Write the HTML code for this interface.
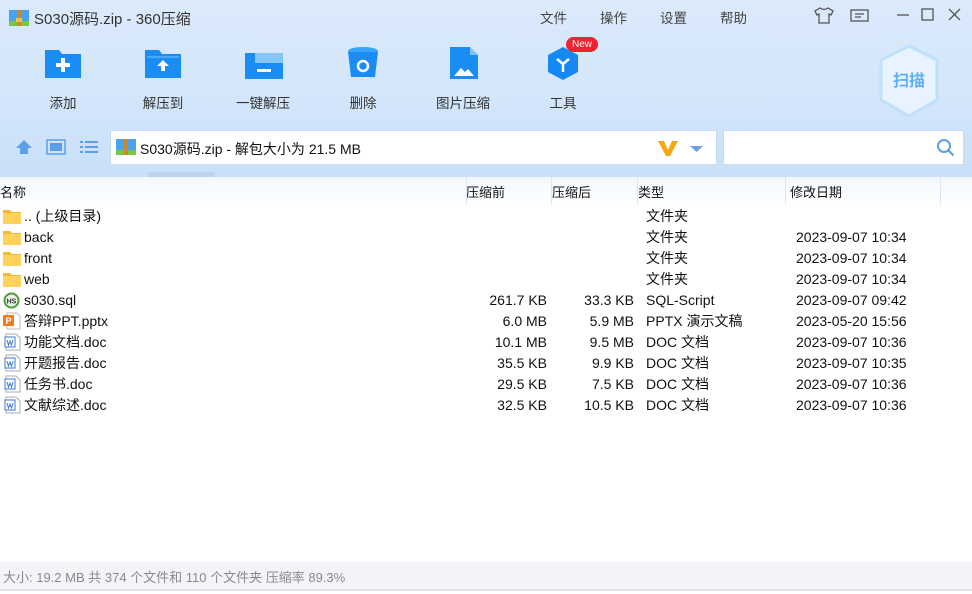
<!DOCTYPE html>
<html><head><meta charset="utf-8"><style>
*{margin:0;padding:0;box-sizing:border-box}
body{width:972px;height:594px;overflow:hidden;font-family:"Liberation Sans","Noto Sans CJK SC",sans-serif;background:#fff;position:relative;color:#111}
.top{position:absolute;left:0;top:0;width:972px;height:177px;background:linear-gradient(180deg,#dbeafb 0%,#d2e5fa 60%,#c9e0f8 100%)}
.abs{position:absolute}
.title{left:34px;top:8px;font-size:15px;color:#333}
.menu{top:7px;font-size:13.5px;color:#444}
.tb{top:46px;width:80px;text-align:center;font-size:13.5px;color:#333}
.tb svg{display:block;margin:0 auto 12px}
.box{background:#fff;border:1px solid #c6dcf2}
.hdr{position:absolute;top:177px;left:0;width:972px;height:27px;background:linear-gradient(180deg,#f3f8fe,#fdfeff);font-size:13px}
.hdr span{position:absolute;top:5px}
.sep{position:absolute;top:0;width:1px;height:27px;background:#dbe7f5}
.row{position:absolute;left:0;width:972px;height:21px;font-size:14px;line-height:21px}
.row .n{position:absolute;left:24px}
.row .a{position:absolute;right:425px;text-align:right}
.row .b{position:absolute;right:338px;text-align:right}
.row .t{position:absolute;left:646px}
.row .d{position:absolute;left:796px}
.row .ic{position:absolute;left:3px;top:3px}
.status{position:absolute;left:0;top:562px;width:972px;height:29px;background:#f3f4f8;font-size:13px;color:#8a8a8a;line-height:31px;padding-left:3px;border-bottom:2px solid #e3e3e6}
</style></head><body>
<div class="top"></div>
<svg class="abs" style="left:9px;top:9px" width="20" height="18"><rect x="0" y="1" width="20" height="14" fill="#4ba3ee"/><rect x="0" y="12" width="20" height="5" fill="#7cc443"/><rect x="8" y="1" width="4" height="16" fill="#c98a2b"/><rect x="7" y="9" width="6" height="4" fill="#f2c14c"/></svg>
<div class="abs title">S030源码.zip - 360压缩</div>
<div class="abs menu" style="left:540px">文件</div>
<div class="abs menu" style="left:600px">操作</div>
<div class="abs menu" style="left:660px">设置</div>
<div class="abs menu" style="left:720px">帮助</div>
<svg class="abs" style="left:814px;top:7px" width="20" height="17" fill="none" stroke="#555" stroke-width="1.3"><path d="M6 1 L1 4 L3 8 L5 7 L5 16 L15 16 L15 7 L17 8 L19 4 L14 1 Q10 4 6 1Z"/></svg>
<svg class="abs" style="left:850px;top:9px" width="19" height="14" fill="none" stroke="#555" stroke-width="1.3"><rect x="1" y="1" width="17" height="11"/><path d="M5 5h9M5 8h6"/></svg>
<svg class="abs" style="left:896px;top:8px" width="70" height="14" stroke="#555" stroke-width="1.3" fill="none"><path d="M1 7h12"/><rect x="26" y="1" width="11" height="11"/><path d="M53 1l11 11M64 1l-11 11"/></svg>

<div class="abs tb" style="left:23px"><svg width="40" height="34"><path d="M2 4h14l3 4h19v24H2z" fill="#1a8cf5"/><path d="M18 12h4v5h5v4h-5v5h-4v-5h-5v-4h5z" fill="#fff"/></svg>添加</div>
<div class="abs tb" style="left:123px"><svg width="40" height="34"><path d="M2 4h14l3 4h19v24H2z" fill="#1a8cf5"/><path d="M4 11h32" stroke="#7fc3ff"/><path d="M20 14l6 6h-4v5h-4v-5h-4z" fill="#fff"/></svg>解压到</div>
<div class="abs tb" style="left:223px"><svg width="40" height="34"><rect x="2" y="7" width="38" height="26" fill="#1a8cf5"/><path d="M12 7h28v10H12z" fill="#86c7fb"/><rect x="14" y="23" width="14" height="3" fill="#fff"/></svg>一键解压</div>
<div class="abs tb" style="left:323px"><svg width="40" height="34"><ellipse cx="20" cy="5" rx="15" ry="4" fill="#38a4f8"/><path d="M5 6l3 25h24l3-25z" fill="#1a8cf5"/><circle cx="20" cy="20" r="5" fill="none" stroke="#fff" stroke-width="2.5"/></svg>删除</div>
<div class="abs tb" style="left:423px"><svg width="40" height="34"><path d="M7 1h20l8 8v24H7z" fill="#1a8cf5"/><path d="M27 1v8h8z" fill="#7fc3ff"/><path d="M11 30l7-8 4 4 3-3 6 7z" fill="#fff"/></svg>图片压缩</div>
<div class="abs tb" style="left:523px"><svg width="40" height="34"><path d="M20 1l15 8v17l-15 8-15-8V9z" fill="#1589f3"/><path d="M14 13l6 5 6-5M20 18v8" stroke="#fff" stroke-width="2.5" fill="none"/></svg>工具</div>
<div class="abs" style="left:566px;top:37px;width:32px;height:15px;border-radius:8px;background:#f2212f;color:#fff;font-size:10px;text-align:center;line-height:15px">New</div>
<svg class="abs" style="left:878px;top:44px" width="62" height="74"><path d="M31 2l28 14v40L31 72 3 56V16z" fill="#e7f3fe" stroke="#bfe0fb" stroke-width="3"/><text x="31" y="42" font-size="16" font-weight="bold" fill="#5eaef0" text-anchor="middle" font-family="Noto Sans CJK SC,sans-serif">扫描</text></svg>

<svg class="abs" style="left:15px;top:139px" width="18" height="16"><path d="M9 1l8 8h-4v6H5V9H1z" fill="#5a9fe8"/></svg>
<svg class="abs" style="left:46px;top:139px" width="20" height="16"><rect x="1" y="1" width="18" height="14" fill="none" stroke="#5a9fe8" stroke-width="1.5"/><rect x="4" y="4" width="12" height="8" fill="#5a9fe8"/></svg>
<svg class="abs" style="left:80px;top:140px" width="19" height="14" fill="#5a9fe8"><rect x="0" y="1" width="3" height="2"/><rect x="5" y="1" width="13" height="2"/><rect x="0" y="6" width="3" height="2"/><rect x="5" y="6" width="13" height="2"/><rect x="0" y="11" width="3" height="2"/><rect x="5" y="11" width="13" height="2"/></svg>
<div class="abs box" style="left:110px;top:130px;width:607px;height:35px"></div>
<svg class="abs" style="left:116px;top:137px" width="20" height="20"><rect x="0" y="2" width="20" height="14" fill="#4ba3ee"/><rect x="0" y="13" width="20" height="5" fill="#7cc443"/><rect x="8" y="2" width="4" height="16" fill="#c98a2b"/></svg>
<div class="abs" style="left:140px;top:139px;font-size:14px">S030源码.zip - 解包大小为 21.5 MB</div>
<svg class="abs" style="left:657px;top:139px" width="48" height="18"><path d="M1 2h6l4 9 4-9h6l-8 15h-4z" fill="#f5a70f"/><path d="M33 7h13l-6.5 6z" fill="#6c9fe2"/></svg>
<div class="abs box" style="left:723px;top:130px;width:241px;height:35px"></div>
<svg class="abs" style="left:936px;top:138px" width="20" height="20" fill="none" stroke="#5a9fe8" stroke-width="2"><circle cx="8" cy="8" r="6"/><path d="M12.5 12.5l5 5"/></svg>
<div class="abs" style="left:148px;top:172px;width:67px;height:5px;background:#bcd4ec"></div>

<div class="hdr"><span style="left:0">名称</span><span style="left:466px">压缩前</span><span style="left:552px">压缩后</span><span style="left:638px">类型</span><span style="left:790px">修改日期</span>
<div class="sep" style="left:466px"></div><div class="sep" style="left:551px"></div><div class="sep" style="left:637px"></div><div class="sep" style="left:785px"></div><div class="sep" style="left:940px"></div></div>

<div class="row" style="top:206px"><svg class="ic" width="18" height="15"><path d="M0 1h7l2 2h9v12H0z" fill="#f4b93a"/><rect x="0" y="4" width="18" height="11" fill="#ffd35b"/></svg><span class="n">.. (上级目录)</span><span class="t">文件夹</span></div>
<div class="row" style="top:227px"><svg class="ic" width="18" height="15"><path d="M0 1h7l2 2h9v12H0z" fill="#f4b93a"/><rect x="0" y="4" width="18" height="11" fill="#ffd35b"/></svg><span class="n">back</span><span class="t">文件夹</span><span class="d">2023-09-07 10:34</span></div>
<div class="row" style="top:248px"><svg class="ic" width="18" height="15"><path d="M0 1h7l2 2h9v12H0z" fill="#f4b93a"/><rect x="0" y="4" width="18" height="11" fill="#ffd35b"/></svg><span class="n">front</span><span class="t">文件夹</span><span class="d">2023-09-07 10:34</span></div>
<div class="row" style="top:269px"><svg class="ic" width="18" height="15"><path d="M0 1h7l2 2h9v12H0z" fill="#f4b93a"/><rect x="0" y="4" width="18" height="11" fill="#ffd35b"/></svg><span class="n">web</span><span class="t">文件夹</span><span class="d">2023-09-07 10:34</span></div>
<div class="row" style="top:290px"><svg class="ic" width="17" height="17" style="top:2px"><circle cx="8.5" cy="8.5" r="8" fill="#4e9a3a"/><circle cx="8.5" cy="8.5" r="6" fill="#e8f3e3"/><text x="8.5" y="11.5" font-size="7" font-weight="bold" text-anchor="middle" fill="#333">HS</text></svg><span class="n">s030.sql</span><span class="a">261.7 KB</span><span class="b">33.3 KB</span><span class="t">SQL-Script</span><span class="d">2023-09-07 09:42</span></div>
<div class="row" style="top:311px"><svg class="ic" width="18" height="18" style="top:1px"><path d="M4 1h10l3 3v13H4z" fill="#fff" stroke="#bbb"/><rect x="0" y="3" width="11" height="11" rx="1" fill="#f07a1d"/><text x="5.5" y="12" font-size="9" font-weight="bold" text-anchor="middle" fill="#fff">P</text></svg><span class="n">答辩PPT.pptx</span><span class="a">6.0 MB</span><span class="b">5.9 MB</span><span class="t">PPTX 演示文稿</span><span class="d">2023-05-20 15:56</span></div>
<div class="row" style="top:332px"><svg class="ic" width="18" height="18" style="top:1px"><path d="M3 1h10l4 4v12H3z" fill="#fff" stroke="#aab"/><rect x="2" y="4" width="10" height="10" fill="#fff" stroke="#3a78d6"/><path d="M4 7l1.5 5 1.5-4 1.5 4 1.5-5" stroke="#3a78d6" fill="none"/></svg><span class="n">功能文档.doc</span><span class="a">10.1 MB</span><span class="b">9.5 MB</span><span class="t">DOC 文档</span><span class="d">2023-09-07 10:36</span></div>
<div class="row" style="top:353px"><svg class="ic" width="18" height="18" style="top:1px"><path d="M3 1h10l4 4v12H3z" fill="#fff" stroke="#aab"/><rect x="2" y="4" width="10" height="10" fill="#fff" stroke="#3a78d6"/><path d="M4 7l1.5 5 1.5-4 1.5 4 1.5-5" stroke="#3a78d6" fill="none"/></svg><span class="n">开题报告.doc</span><span class="a">35.5 KB</span><span class="b">9.9 KB</span><span class="t">DOC 文档</span><span class="d">2023-09-07 10:35</span></div>
<div class="row" style="top:374px"><svg class="ic" width="18" height="18" style="top:1px"><path d="M3 1h10l4 4v12H3z" fill="#fff" stroke="#aab"/><rect x="2" y="4" width="10" height="10" fill="#fff" stroke="#3a78d6"/><path d="M4 7l1.5 5 1.5-4 1.5 4 1.5-5" stroke="#3a78d6" fill="none"/></svg><span class="n">任务书.doc</span><span class="a">29.5 KB</span><span class="b">7.5 KB</span><span class="t">DOC 文档</span><span class="d">2023-09-07 10:36</span></div>
<div class="row" style="top:395px"><svg class="ic" width="18" height="18" style="top:1px"><path d="M3 1h10l4 4v12H3z" fill="#fff" stroke="#aab"/><rect x="2" y="4" width="10" height="10" fill="#fff" stroke="#3a78d6"/><path d="M4 7l1.5 5 1.5-4 1.5 4 1.5-5" stroke="#3a78d6" fill="none"/></svg><span class="n">文献综述.doc</span><span class="a">32.5 KB</span><span class="b">10.5 KB</span><span class="t">DOC 文档</span><span class="d">2023-09-07 10:36</span></div>

<div class="status">大小: 19.2 MB 共 374 个文件和 110 个文件夹 压缩率 89.3%</div>
</body></html>
